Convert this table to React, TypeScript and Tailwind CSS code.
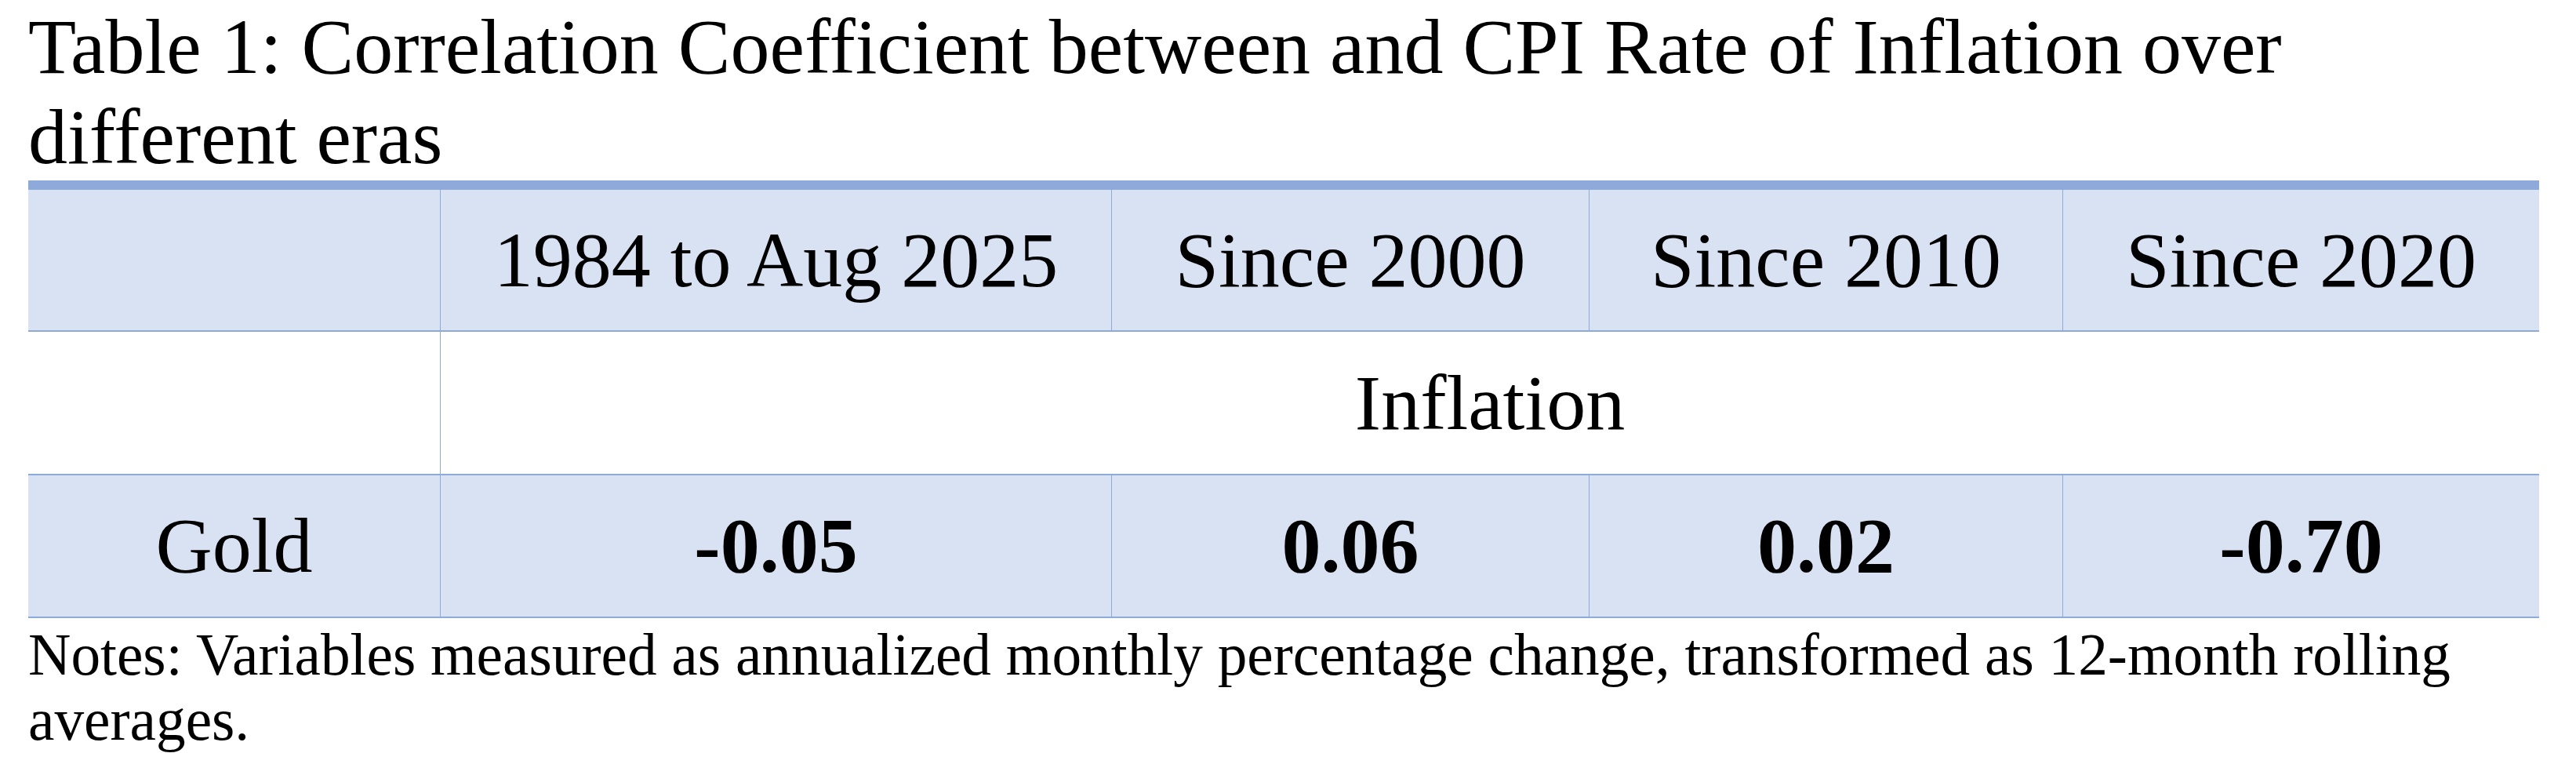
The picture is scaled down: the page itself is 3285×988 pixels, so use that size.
const eras = ["1984 to Aug 2025", "Since 2000", "Since 2010", "Since 2020"];
const gold = ["-0.05", "0.06", "0.02", "-0.70"];

const App = () => {
  return (
    <div className="min-h-screen bg-white pl-[36px] text-black font-['Liberation_Serif','Times_New_Roman',serif]">
      <div className="w-[3202px]">
        {/* title */}
        <h1 className="text-[100px] leading-[115px] pt-[2px] h-[230px]">
          Table 1: Correlation Coefficient between and CPI Rate of Inflation over different eras
        </h1>

        {/* table */}
        <div className="h-[12px] bg-[#8EAADB]" />
        <div className="grid grid-cols-[525px_856px_609px_604px_608px] h-[181px] bg-[#D9E2F3] border-b-2 border-[#8EAADB] text-[100px]">
          <div />
          {eras.map((e) => (
            <div key={e} className="flex items-center justify-center border-l border-[#8EAADB]">
              {e}
            </div>
          ))}
        </div>
        <div className="grid grid-cols-[525px_1fr] h-[183px] bg-white border-b-2 border-[#8EAADB] text-[100px]">
          <div />
          <div className="flex items-center justify-center border-l border-[#8EAADB]">Inflation</div>
        </div>
        <div className="grid grid-cols-[525px_856px_609px_604px_608px] h-[182px] bg-[#D9E2F3] border-b-2 border-[#8EAADB] text-[100px]">
          <div className="flex items-center justify-center">Gold</div>
          {gold.map((g) => (
            <div key={g} className="flex items-center justify-center border-l border-[#8EAADB] font-bold">
              {g}
            </div>
          ))}
        </div>

        {/* notes */}
        <p className="text-[75.3px] leading-[83px] mt-[5px]">
          Notes: Variables measured as annualized monthly percentage change, transformed as 12-month rolling averages.
        </p>
      </div>
    </div>
  );
};

export default App;
